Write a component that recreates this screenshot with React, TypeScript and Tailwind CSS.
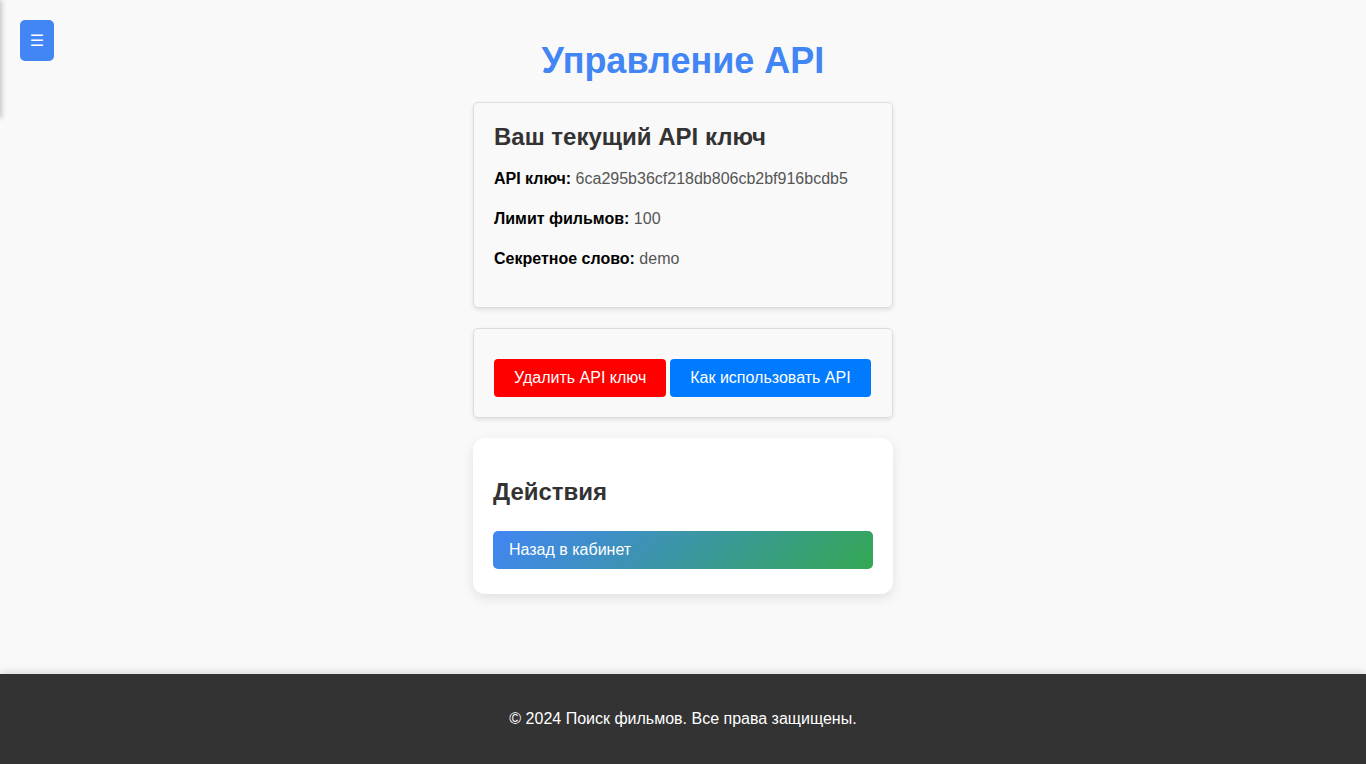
export default function App() {
  return (
    <div className="min-h-screen flex flex-col bg-[#f9f9f9] font-['Liberation_Sans',Arial,sans-serif] text-[#333]">
      {/* hidden sidebar, only its shadow peeks in */}
      <div className="fixed left-[-250px] top-0 w-[250px] h-[118px] bg-white shadow-[2px_0_5px_rgba(0,0,0,0.2)]" />

      <button className="fixed left-[20px] top-[20px] w-[34px] h-[41px] rounded-[5px] bg-[#4285f4] text-white text-[16px] flex items-center justify-center font-['DejaVu_Sans',sans-serif]">
        ☰
      </button>

      <main className="flex-1 flex flex-col items-center pt-[40px] pb-[60px]">
        <h1 className="text-[36px] leading-[normal] font-bold text-[#4285f4] mb-[20px]">Управление API</h1>

        <section className="w-[420px] bg-[#f9f9f9] border border-[#ddd] rounded-[5px] shadow-[0_2px_4px_rgba(0,0,0,0.1)] px-[20px] pt-[20px] pb-[20px]">
          <h2 className="text-[24px] leading-[normal] font-bold text-[#333] mb-[16px]">Ваш текущий API ключ</h2>
          <p className="text-[16px] leading-[24px] mb-[16px] text-[#555]">
            <strong className="text-black">API ключ:</strong> 6ca295b36cf218db806cb2bf916bcdb5
          </p>
          <p className="text-[16px] leading-[24px] mb-[16px] text-[#555]">
            <strong className="text-black">Лимит фильмов:</strong> 100
          </p>
          <p className="text-[16px] leading-[24px] mb-[16px] text-[#555]">
            <strong className="text-black">Секретное слово:</strong> demo
          </p>
        </section>

        <section className="w-[420px] mt-[20px] bg-[#f9f9f9] border border-[#ddd] rounded-[5px] shadow-[0_2px_4px_rgba(0,0,0,0.1)] px-[20px] pt-[30px] pb-[20px]">
          <div className="flex gap-[4px]">
            <button className="bg-[#ff0000] text-white text-[16px] leading-[normal] px-[20px] py-[10px] rounded-[4px]">
              Удалить API ключ
            </button>
            <button className="bg-[#007bff] text-white text-[16px] leading-[normal] px-[20px] py-[10px] rounded-[4px]">
              Как использовать API
            </button>
          </div>
        </section>

        <section className="w-[420px] mt-[20px] bg-white rounded-[12px] shadow-[0_4px_12px_rgba(0,0,0,0.1)] px-[20px] pt-[40px] pb-[25px]">
          <h2 className="text-[24px] leading-[normal] font-bold text-[#333] mb-[25px]">Действия</h2>
          <button className="w-full text-left bg-[linear-gradient(135deg,#4285f4,#34a853)] text-white text-[16px] leading-[normal] px-[16px] py-[10px] rounded-[5px]">
            Назад в кабинет
          </button>
        </section>
      </main>

      <footer className="bg-[#333] text-white text-center p-[20px] shadow-[0_-2px_8px_rgba(0,0,0,0.12)]">
        <p className="text-[16px] leading-[normal] my-[16px]">© 2024 Поиск фильмов. Все права защищены.</p>
      </footer>
    </div>
  )
}
